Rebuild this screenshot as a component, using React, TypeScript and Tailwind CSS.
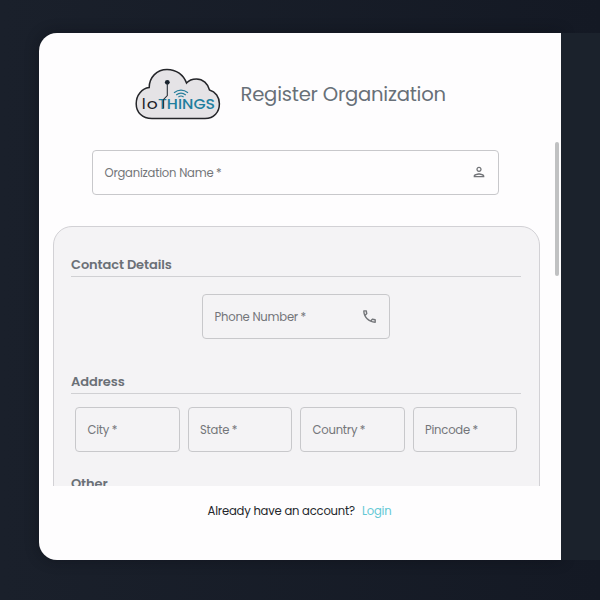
import type { ReactNode } from 'react';
import { MdOutlinePerson, MdOutlinePhone } from 'react-icons/md';

function Logo() {
  return (
    <svg viewBox="0 0 88 54" className="h-[54px] w-[88px] shrink-0" role="img" aria-label="IoTHINGS">
      <path
        d="M18 51.6 C8 51.6 2.2 45 2.2 36.7 C2.2 28 8 21.5 15.2 20.6 C15.2 10.2 23 2.4 33 2.4 C42.5 2.4 49.5 8 52.5 16 C55 13 58.5 11.9 62.5 11.9 C69 11.9 74 16.7 75.5 23 C81.5 24.6 85.4 30.2 85.4 36.7 C85.4 45 80 51.6 71 51.6 Z"
        fill="#e5e3e6"
        stroke="#25262a"
        strokeWidth="1.5"
      />
      <g fontFamily="Poppins, Inter, 'Liberation Sans', sans-serif">
        <text x="7.8" y="41.6" fontSize="16" fill="#202127" fontWeight="400">
          I
        </text>
        <text x="12.8" y="41.6" fontSize="15" fill="#202127" fontWeight="400" textLength="11" lengthAdjust="spacingAndGlyphs">
          o
        </text>
        <text x="24" y="41.6" fontSize="13.4" fill="#217e9e" fontWeight="500" textLength="57" lengthAdjust="spacingAndGlyphs">
          THINGS
        </text>
      </g>
      <circle cx="33.3" cy="15.3" r="2.4" fill="#17212c" />
      <path d="M33.3 16 V28.5 L29.6 32.5 V41.5" fill="none" stroke="#293038" strokeWidth="1.1" />
      <g fill="none" stroke="#267e9b" strokeWidth="1.2">
        <path d="M40 25.8 Q47 20.6 54 25.8" />
        <path d="M42.2 27.9 Q47 24.3 51.8 27.9" />
        <path d="M44.4 29.9 Q47 28.1 49.6 29.9" />
      </g>
    </svg>
  );
}

function Field({ label, className = '', icon }: { label: string; className?: string; icon?: ReactNode }) {
  return (
    <label className={`flex h-[45px] items-center justify-between rounded-[4px] border border-[#c8c8cb] pl-[11.5px] pr-[11px] text-[11.6px] tracking-[-0.22px] text-[#737579] ${className}`}>
      <span className="whitespace-nowrap pt-[2.5px]">
        {label}
        <span className="ml-[2.5px]">*</span>
      </span>
      {icon}
    </label>
  );
}

function SectionTitle({ children, className }: { children: ReactNode; className: string }) {
  return (
    <h2 className={`border-b border-[#d0d0d3] text-[13px] font-semibold leading-[20px] tracking-[-0.1px] text-[#6b7077] ${className}`}>
      {children}
    </h2>
  );
}

export default function App() {
  return (
    <main className="flex h-[600px] w-[600px] overflow-hidden bg-[#1a202b] bg-linear-to-r from-[#1a202b] to-[#141924] pl-[38.5px] pt-[33.3px] font-[Poppins,Inter,'Liberation_Sans',sans-serif]">
      <section className="flex h-[526.5px] w-[522px] shrink-0 flex-col rounded-l-[18px] bg-[#fefdfe] shadow-[0_0_14px_rgba(10,13,20,0.45)]">
        <header className="flex h-[108.7px] shrink-0 items-center gap-[18.5px] pl-[95.5px] pt-[12px]">
          <Logo />
          <h1 className="whitespace-nowrap text-[19.6px] leading-7 tracking-[-0.22px] text-[#687078]">Register Organization</h1>
        </header>
        <div className="flex h-[344px] shrink-0 justify-between overflow-hidden">
          <div className="w-[501px]">
            <Field
              label="Organization Name"
              className="ml-[53.5px] mt-2 w-[407px]"
              icon={<MdOutlinePerson className="h-4 w-4" />}
            />
            <div className="ml-[14px] mt-[31px] h-[380px] w-[487px] rounded-[19px] border-[1.5px] border-[#d2d1d5] bg-[#f4f3f5] px-[17.5px]">
              <SectionTitle className="mt-[28px] h-[22px]">Contact Details</SectionTitle>
              <Field
                label="Phone Number"
                className="mx-auto mt-[17px] w-[188px]"
                icon={<MdOutlinePhone className="h-[17px] w-[17px]" />}
              />
              <SectionTitle className="mt-[33px] h-[22px]">Address</SectionTitle>
              <div className="mt-[13px] grid grid-cols-4 gap-2 px-1">
                <Field label="City" />
                <Field label="State" />
                <Field label="Country" />
                <Field label="Pincode" />
              </div>
              <SectionTitle className="mt-[22px] h-[22px]">Other</SectionTitle>
            </div>
          </div>
          <div className="mr-[2px] h-[134px] w-[4px] rounded-full bg-[#c0c1c2]" />
        </div>
        <footer className="flex flex-1 items-start justify-center gap-[7px] pt-[16px] text-[11.6px] leading-[18px] tracking-[-0.21px] text-[#24272c]">
          <span>Already have an account?</span>
          <a className="text-[#62c8d5]">Login</a>
        </footer>
      </section>
      <aside className="h-[526.5px] flex-1 bg-[#1b222c]" />
    </main>
  );
}
